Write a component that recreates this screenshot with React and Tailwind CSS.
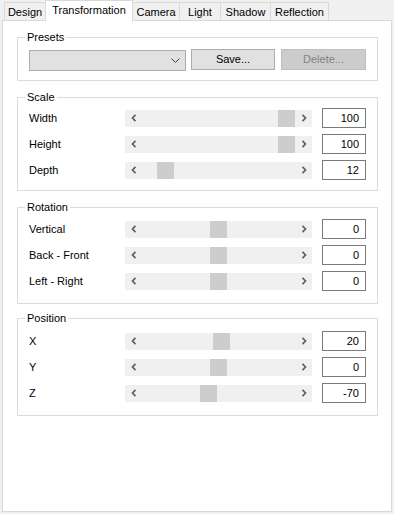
import React from "react";

const tabs = [
  { label: "Design", w: "w-[42px]" },
  { label: "Transformation", w: "w-[88px]", active: true },
  { label: "Camera", w: "w-[48px]" },
  { label: "Light", w: "w-[42px]" },
  { label: "Shadow", w: "w-[51px]" },
  { label: "Reflection", w: "w-[59px]" },
];

const groups = [
  {
    title: "Scale",
    mt: "mt-[9px]",
    pt: "pt-[4px]",
    pb: "pb-[10px]",
    rows: [
      ["Width", 136, "100"],
      ["Height", 136, "100"],
      ["Depth", 15, "12"],
    ],
  },
  {
    title: "Rotation",
    mt: "mt-[9px]",
    pt: "pt-[5px]",
    pb: "pb-[12px]",
    rows: [
      ["Vertical", 68, "0"],
      ["Back - Front", 68, "0"],
      ["Left - Right", 68, "0"],
    ],
  },
  {
    title: "Position",
    mt: "mt-[7px]",
    pt: "pt-[6px]",
    pb: "pb-[12px]",
    rows: [
      ["X", 71, "20"],
      ["Y", 68, "0"],
      ["Z", 58, "-70"],
    ],
  },
];

function Chevron({ dir }) {
  return (
    <svg width="6" height="8" viewBox="0 0 6 8" className="block">
      <path
        d={dir === "left" ? "M4.5 0.8 L1.5 4 L4.5 7.2" : "M1.5 0.8 L4.5 4 L1.5 7.2"}
        fill="none"
        stroke="#606060"
        strokeWidth="1.7"
      />
    </svg>
  );
}

function ScrollBar({ offset }) {
  return (
    <div className="flex h-[17px] w-[187px] bg-[#f0f0f0]">
      <div className="flex w-[17px] items-center justify-center">
        <Chevron dir="left" />
      </div>
      <div className="flex flex-1">
        <div style={{ width: offset }} />
        <div className="h-full w-[17px] bg-[#cdcdcd]" />
      </div>
      <div className="flex w-[17px] items-center justify-center">
        <Chevron dir="right" />
      </div>
    </div>
  );
}

function Group({ title, mt, pt, pb, children }) {
  return (
    <fieldset className={`border border-[#dcdcdc] ${mt}`}>
      <legend className="ml-[7px] px-[2px] text-[11px] leading-[14px] text-black">{title}</legend>
      <div className={`px-[11px] ${pt} ${pb}`}>{children}</div>
    </fieldset>
  );
}

export default function App() {
  return (
    <div className="flex h-[514px] w-[394px] flex-col bg-[#f0f0f0] px-[2px] pb-[2px] font-['Liberation_Sans',Arial,sans-serif] text-[11px] text-black">
      <div className="flex h-[20px] items-start pl-[2px]">
        {tabs.map((t, i) =>
          t.active ? (
            <div
              key={t.label}
              className={`relative z-10 flex h-[21px] ${t.w} items-center justify-center border-x border-t border-[#d9d9d9] bg-white pb-[1px] ${i > 0 ? "-ml-px" : ""}`}
            >
              {t.label}
            </div>
          ) : (
            <div
              key={t.label}
              className={`mt-[2px] flex h-[18px] ${t.w} items-center justify-center border-x border-t border-[#d9d9d9] bg-[#f0f0f0] pt-[1px] ${i > 0 ? "-ml-px" : ""}`}
            >
              {t.label}
            </div>
          )
        )}
      </div>
      <div className="flex-1 border border-[#d9d9d9] bg-white pl-[14px] pr-[13px] pt-[9px]">
        <Group title="Presets" mt="mt-0" pt="pt-[5px]" pb="pb-[9px]">
          <div className="flex items-start">
            <div className="mt-[1px] flex h-[21px] w-[157px] items-center justify-end border border-[#adadad] bg-[#e1e1e1] pr-[5px]">
              <svg width="9" height="5" viewBox="0 0 9 5" className="block">
                <path d="M0.5 0.5 L4.5 4.5 L8.5 0.5" fill="none" stroke="#404040" strokeWidth="1" />
              </svg>
            </div>
            <div className="ml-[5px] flex h-[21px] w-[84px] items-center justify-center border border-[#adadad] bg-[#e1e1e1]">
              Save...
            </div>
            <div className="ml-[6px] flex h-[21px] w-[85px] items-center justify-center border border-[#bfbfbf] bg-[#cccccc] text-[#838383]">
              Delete...
            </div>
          </div>
        </Group>
        {groups.map((g) => (
          <Group key={g.title} title={g.title} mt={g.mt} pt={g.pt} pb={g.pb}>
            <div className="flex flex-col gap-[6px]">
              {g.rows.map(([label, off, val]) => (
                <div key={label} className="flex h-[20px] items-center">
                  <div className="w-[96px]">{label}</div>
                  <ScrollBar offset={off} />
                  <div className="ml-[10px] flex h-[20px] w-[44px] items-center justify-end border border-[#7a7a7a] bg-white pr-[6px]">
                    {val}
                  </div>
                </div>
              ))}
            </div>
          </Group>
        ))}
      </div>
    </div>
  );
}
